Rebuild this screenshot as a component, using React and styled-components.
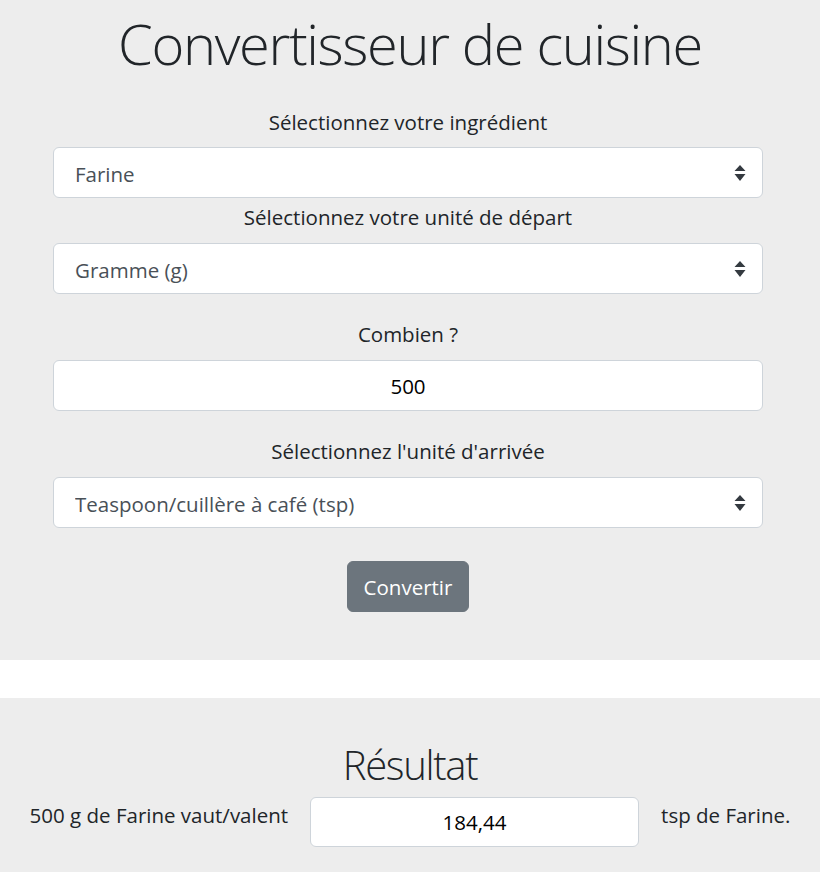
import React from "react";
import styled, { createGlobalStyle } from "styled-components";

const GlobalStyle = createGlobalStyle`
  html, body { margin: 0; padding: 0; background: #fff; }
  body {
    font-family: "Open Sans", "Noto Sans", sans-serif;
    color: #212529;
    font-size: 20.5px;
    line-height: 1.5;
  }
  * { box-sizing: border-box; }
`;

const Panel = styled.section`
  background: #ededed;
  padding: ${(p) => p.$pad};
  margin-bottom: ${(p) => p.$mb || "0"};
`;

const Title = styled.h1`
  margin: 0;
  font-weight: 300;
  font-size: ${(p) => p.$size};
  height: ${(p) => p.$h};
  line-height: ${(p) => p.$h};
  text-align: center;
  color: #212529;
  letter-spacing: ${(p) => p.$ls || "0"};
`;

const Form = styled.div`
  width: 710px;
  margin-left: 53px;
  display: flex;
  flex-direction: column;
`;

const Group = styled.div`
  display: flex;
  flex-direction: column;
  margin-top: ${(p) => p.$mt || "0"};
`;

const Label = styled.label`
  display: block;
  text-align: center;
  font-size: 20.5px;
  line-height: 30px;
  margin-bottom: ${(p) => p.$mb || "10px"};
`;

const SelectWrap = styled.div`
  position: relative;
  height: 51px;
`;

const Select = styled.select`
  appearance: none;
  -webkit-appearance: none;
  width: 100%;
  height: 51px;
  border: 1px solid #ced4da;
  border-radius: 6px;
  background: #fff;
  color: #495057;
  font-family: inherit;
  font-size: 20.5px;
  padding: 3px 40px 0 21px;
  outline: none;
`;

const Arrow = styled.svg`
  position: absolute;
  right: 17px;
  top: 18px;
  pointer-events: none;
`;

const TextInput = styled.input`
  width: ${(p) => p.$w || "100%"};
  height: ${(p) => p.$h || "51px"};
  border: 1px solid #ced4da;
  border-radius: 6px;
  background: #fff;
  color: #000;
  text-align: center;
  font-family: inherit;
  font-size: 20.5px;
  outline: none;
  flex: none;
`;

const ButtonRow = styled.div`
  display: flex;
  justify-content: center;
  margin-top: 33px;
`;

const Button = styled.button`
  background: #6c757d;
  color: #fff;
  border: 1px solid #6c757d;
  border-radius: 6px;
  font-family: inherit;
  font-size: 20.5px;
  height: 51px;
  padding: 0 16px;
  cursor: pointer;
`;

const ResultRow = styled.div`
  display: flex;
  justify-content: center;
  align-items: flex-start;
  gap: 22px;
  margin-top: 8px;
`;

const ResultText = styled.span`
  font-size: 20.5px;
  line-height: 30px;
  padding-top: 3px;
  white-space: nowrap;
`;

const Chevrons = () => (
  <Arrow width="12" height="16" viewBox="0 0 12 16">
    <path d="M6 0 L11.5 6 L0.5 6 Z M6 16 L11.5 9 L0.5 9 Z" fill="#343a40" />
  </Arrow>
);

const SelectField = ({ value, options }) => (
  <SelectWrap>
    <Select defaultValue={value}>
      {options.map((o) => (
        <option key={o} value={o}>{o}</option>
      ))}
    </Select>
    <Chevrons />
  </SelectWrap>
);

export default function App() {
  return (
    <>
      <GlobalStyle />
      <Panel $pad="10px 0 48px" $mb="38px">
        <Title $size="56px" $h="67px" $ls="-1.35px">Convertisseur de cuisine</Title>
        <Form>
          <Group $mt="30px">
            <Label>Sélectionnez votre ingrédient</Label>
            <SelectField value="Farine" options={["Farine", "Sucre", "Beurre", "Lait"]} />
          </Group>
          <Group $mt="4px">
            <Label $mb="11px">Sélectionnez votre unité de départ</Label>
            <SelectField value="Gramme (g)" options={["Gramme (g)", "Kilogramme (kg)", "Millilitre (ml)"]} />
          </Group>
          <Group $mt="25px">
            <Label $mb="11px">Combien ?</Label>
            <TextInput defaultValue="500" />
          </Group>
          <Group $mt="25px">
            <Label $mb="11px">Sélectionnez l'unité d'arrivée</Label>
            <SelectField
              value="Teaspoon/cuillère à café (tsp)"
              options={["Teaspoon/cuillère à café (tsp)", "Tablespoon/cuillère à soupe (tbsp)", "Cup/tasse"]}
            />
          </Group>
          <ButtonRow>
            <Button>Convertir</Button>
          </ButtonRow>
        </Form>
      </Panel>
      <Panel $pad="43px 0 25px">
        <Title $size="40px" $h="48px" $ls="-1.3px">Résultat</Title>
        <ResultRow>
          <ResultText>500 g de Farine vaut/valent</ResultText>
          <TextInput $w="329px" $h="50px" defaultValue="184,44" readOnly />
          <ResultText>tsp de Farine.</ResultText>
        </ResultRow>
      </Panel>
    </>
  );
}
